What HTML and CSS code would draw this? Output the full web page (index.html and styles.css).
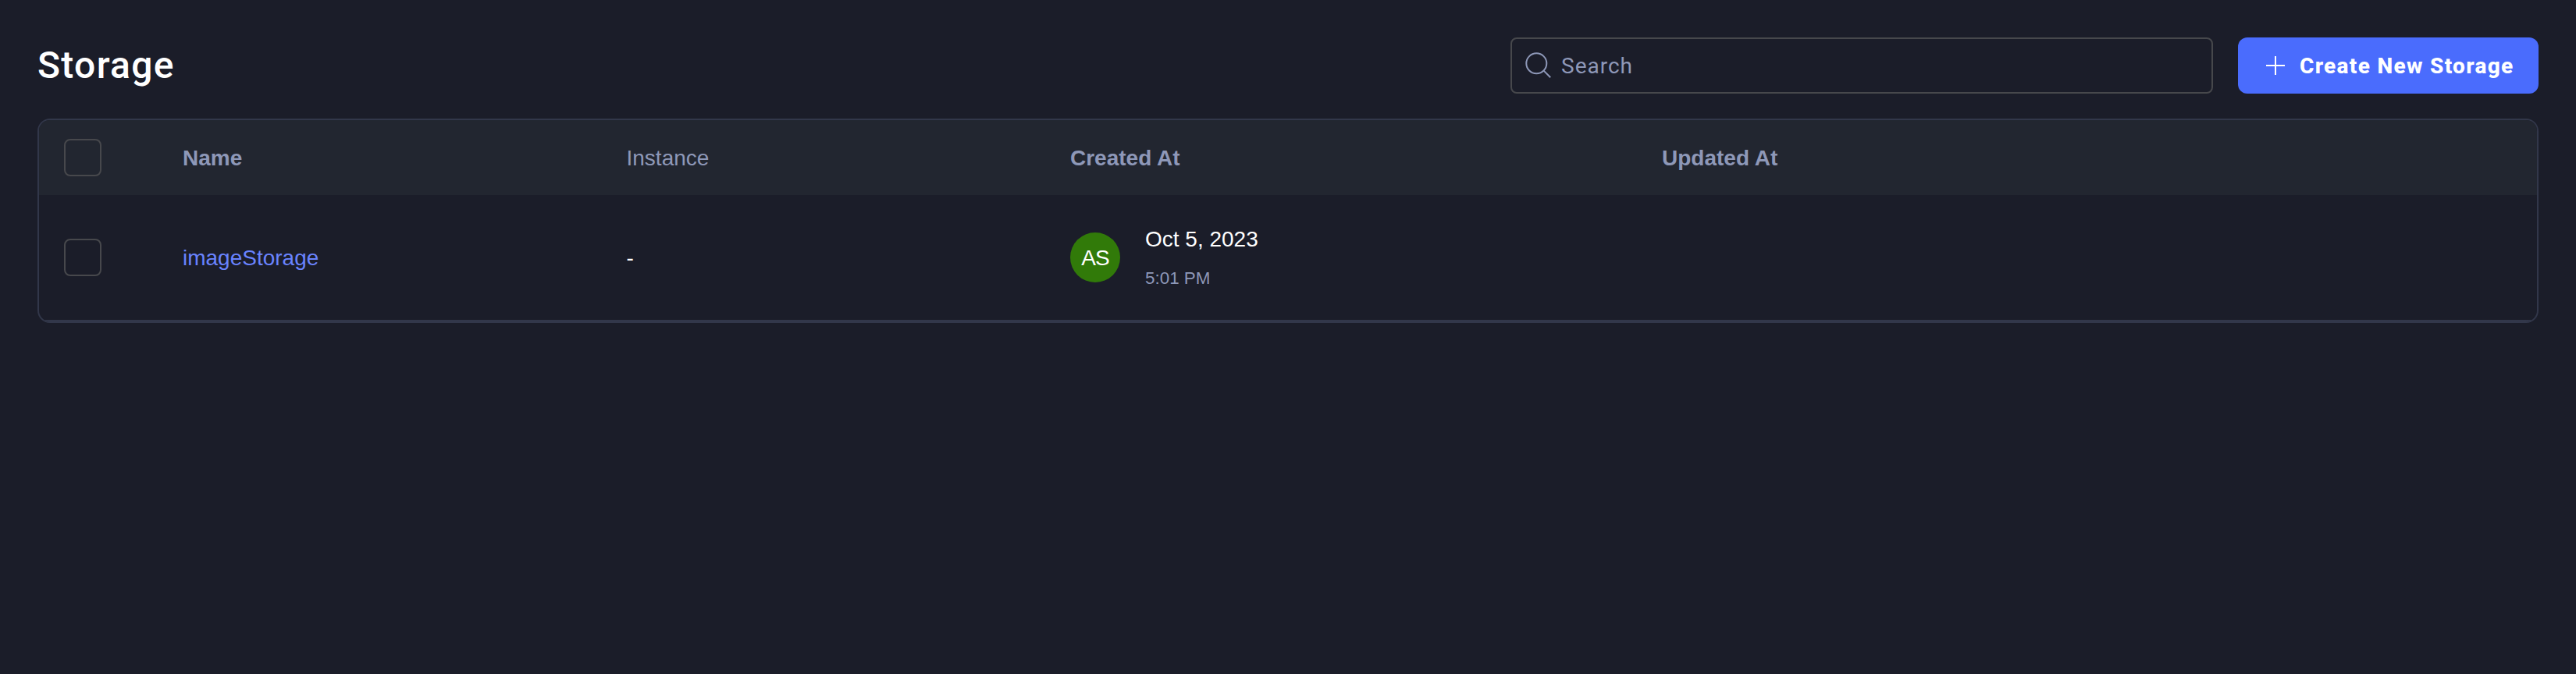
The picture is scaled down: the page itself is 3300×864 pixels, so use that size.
FILE: index.html
```html
<!DOCTYPE html>
<html lang="en">
<head>
<meta charset="utf-8">
<title>Storage</title>
<link rel="stylesheet" href="styles.css">
</head>
<body>
<header class="toolbar">
  <h1 class="title">Storage</h1>
  <label class="search">
    <svg class="search-icon" width="34" height="34" viewBox="0 0 34 34"><circle cx="14.3" cy="14.3" r="13"/><path d="M23.6 23.6L32.2 32.2"/></svg>
    <span class="label">Search</span>
  </label>
  <button class="create">
    <svg class="plus-icon" width="24" height="24" viewBox="0 0 24 24"><path d="M12 0v24M0 12h24"/></svg>
    <span class="label">Create New Storage</span>
  </button>
</header>
<main class="table">
  <div class="row head">
    <div class="cell"><span class="checkbox"></span></div>
    <div class="cell text">Name</div>
    <div class="cell text regular">Instance</div>
    <div class="cell text">Created At</div>
    <div class="cell text">Updated At</div>
  </div>
  <div class="row item">
    <div class="cell"><span class="checkbox"></span></div>
    <div class="cell text"><a class="link">imageStorage</a></div>
    <div class="cell text">-</div>
    <div class="cell created">
      <span class="avatar">AS</span>
      <div class="stamp"><span class="date">Oct 5, 2023</span><span class="time">5:01 PM</span></div>
    </div>
    <div class="cell"></div>
  </div>
</main>
</body>
</html>
```
FILE: styles.css
```css
* { box-sizing: border-box; }
body { margin: 0; padding: 48px; min-height: 864px; background: #1b1d29; color: #fff; font: 28px/32px "Liberation Sans", Arial, sans-serif; }
.toolbar { display: flex; align-items: center; gap: 32px; height: 72px; margin-bottom: 32px; font-family: Roboto, sans-serif; }
.title { flex: 1; margin: 0; font-size: 48px; line-height: 56px; font-weight: 500; letter-spacing: 1.3px; }
.search { display: flex; align-items: center; gap: 12px; width: 900px; height: 72px; padding: 0 17px; border: 2px solid #47484c; border-radius: 8px; color: #8e98b8; letter-spacing: 1px; }
.label { padding-top: 2px; }
.search-icon, .plus-icon { flex: none; fill: none; stroke: currentColor; stroke-width: 2; }
.create { display: flex; align-items: center; width: 385px; height: 72px; padding: 0 0 0 36px; gap: 19px; border: 0; border-radius: 12px; background: #4a6cfd; color: #fff; font: 800 28px/32px Roboto, sans-serif; letter-spacing: 1.3px; white-space: nowrap; }
.table { border: 2px solid #32374a; border-radius: 16px; overflow: hidden; }
.row { display: grid; grid-template-columns: 152px 568.5px 568.5px 758px 1fr; align-items: center; }
.head { height: 96px; background: #222630; color: #8e98b8; font-weight: 700; }
.item { height: 162px; border-bottom: 2px solid #32374a; }
.cell { padding: 0 32px; }
.text { padding-top: 2px; }
.regular { font-weight: 400; }
.checkbox { display: block; width: 48px; height: 48px; border: 2px solid #47484c; border-radius: 8px; }
.link { color: #6983fe; }
.created { display: flex; align-items: center; gap: 32px; }
.avatar { width: 64px; height: 64px; border-radius: 50%; background: #317a09; line-height: 66px; text-align: center; letter-spacing: -1px; }
.stamp { display: flex; flex-direction: column; gap: 18px; padding-top: 4px; }
.time { color: #8e98b8; font-size: 22.4px; }
```
